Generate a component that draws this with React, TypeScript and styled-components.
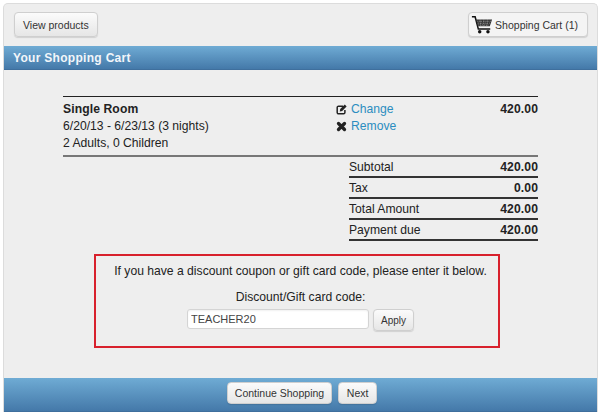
import React from "react";
import styled, { createGlobalStyle } from "styled-components";

const Global = createGlobalStyle`
  html, body { margin: 0; padding: 0; background: #fff; }
  body { width: 601px; height: 414px; overflow: hidden; font-family: "Liberation Sans", Arial, sans-serif; }
`;

const Page = styled.div`
  padding: 3px;
  width: 601px;
  height: 414px;
  box-sizing: border-box;
`;

const Panel = styled.div`
  width: 595px;
  height: 409px;
  box-sizing: border-box;
  background: #eeeeee;
  border: 1px solid #dcdcdc;
  border-bottom: 0;
  border-radius: 5px 5px 0 0;
  display: flex;
  flex-direction: column;
  overflow: hidden;
`;

const TopBar = styled.div`
  height: 42px;
  flex: none;
  display: flex;
  justify-content: space-between;
  align-items: flex-start;
  padding: 8px 9px 0 10px;
  box-sizing: border-box;
`;

const Button = styled.button<{ $flat?: boolean }>`
  height: 25px;
  box-sizing: border-box;
  padding: 0 8px;
  display: inline-flex;
  align-items: center;
  justify-content: center;
  font: 10.5px "Liberation Sans", Arial, sans-serif;
  color: #333;
  border: 1px solid #cfcfcf;
  border-radius: 4px;
  background: ${(p) => (p.$flat ? "#f4f4f4" : "linear-gradient(#fbfbfb, #e6e6e6)")};
  box-shadow: 0 1px 1px rgba(0, 0, 0, 0.12);
`;

const CartButton = styled(Button)`
  padding: 0 9px 0 2px;
  gap: 2px;
`;

const BlueBar = styled.div`
  background: linear-gradient(#6fabd4, #4479a9);
  border-bottom: 1px solid #3f6f9d;
  box-sizing: border-box;
`;

const Header = styled(BlueBar)`
  height: 24px;
  flex: none;
  display: flex;
  align-items: center;
  padding-left: 9px;
  color: #f2f6fa;
  font-size: 12px;
  font-weight: bold;
  letter-spacing: 0.3px;
`;

const Content = styled.div`
  flex: 1;
  padding: 26px 59px 0 59px;
  display: flex;
  flex-direction: column;
  font-size: 12.15px;
  color: #222;
`;

const Item = styled.div`
  border-top: 1px solid #222;
  border-bottom: 2px solid #777;
  height: 61px;
  box-sizing: border-box;
  padding-top: 4px;
  display: grid;
  grid-template-columns: 273px 1fr auto;
  line-height: 17px;
`;

const Strong = styled.div`
  font-weight: bold;
  letter-spacing: 0.1px;
`;

const ActionList = styled.div`
  display: flex;
  flex-direction: column;
`;

const Action = styled.a`
  display: flex;
  align-items: center;
  gap: 4px;
  color: #2b8dc0;
`;

const Summary = styled.div`
  align-self: flex-end;
  width: 189px;
  display: flex;
  flex-direction: column;
`;

const SummaryRow = styled.div`
  display: flex;
  justify-content: space-between;
  align-items: center;
  height: 21px;
  box-sizing: border-box;
  border-bottom: 2px solid #333;
  line-height: 19px;
  padding-top: 2px;
`;

const Promo = styled.div`
  align-self: center;
  margin-top: 13px;
  margin-right: 8px;
  width: 406px;
  height: 94px;
  box-sizing: border-box;
  border: 2px solid #d8202c;
  display: flex;
  flex-direction: column;
  align-items: center;
  padding: 7px 0 0 8px;
`;

const PromoLine = styled.div`
  line-height: 17px;
  margin-bottom: 9px;
`;

const CodeLabel = styled.div`
  line-height: 17px;
  margin-bottom: 3px;
`;

const FormRow = styled.div`
  display: flex;
  align-items: flex-start;
  gap: 4px;
`;

const CodeInput = styled.input`
  width: 182px;
  height: 20px;
  box-sizing: border-box;
  border: 1px solid #d4d4d4;
  border-radius: 3px;
  background: #fff;
  padding: 0 3px;
  font: 11px "Liberation Sans", Arial, sans-serif;
  color: #444;
  box-shadow: inset 0 1px 2px rgba(0, 0, 0, 0.06);
`;

const SmallButton = styled(Button)`
  height: 22px;
  padding: 0 7px;
  font-size: 10px;
`;

const Footer = styled(BlueBar)`
  height: 34px;
  flex: none;
  display: flex;
  justify-content: center;
  align-items: flex-start;
  padding-top: 4px;
  padding-left: 3px;
  gap: 6px;
`;

const FooterButton = styled(Button)`
  height: 22px;
  padding: 0 7px;
  min-width: 39px;
`;

const CartIcon = () => (
  <svg width="22" height="21" viewBox="0 0 24 22" aria-hidden="true">
    <path d="M1 2.5h3.5L8 16h13" fill="none" stroke="#111" strokeWidth="1.7" />
    <path d="M5.5 5.5H23L20.5 13H7.5Z" fill="#333" />
    <path d="M7 7.5h15M7.5 9.5h13.5M8 11.5h12M10 5.5l1 8M14 5.5v8M18 5.5l-1 8" stroke="#bbb" strokeWidth="0.7" strokeDasharray="1 1" fill="none" />
    <circle cx="9.5" cy="19" r="1.9" fill="#111" />
    <circle cx="18.5" cy="19" r="1.9" fill="#111" />
  </svg>
);

const EditIcon = () => (
  <svg width="11" height="11" viewBox="0 0 11 11" aria-hidden="true">
    <path d="M7 2.2H2.6A1.3 1.3 0 0 0 1.2 3.5v5a1.3 1.3 0 0 0 1.4 1.3h5a1.3 1.3 0 0 0 1.3-1.3V6" fill="none" stroke="#222" strokeWidth="1.5" />
    <path d="M3.8 7.4 4.2 5 8.8.6l1.8 1.8L6.2 6.9Z" fill="#222" />
  </svg>
);

const RemoveIcon = () => (
  <svg width="11" height="11" viewBox="0 0 11 11" aria-hidden="true">
    <path d="M2.5 2.5 8.5 8.5M8.5 2.5 2.5 8.5" stroke="#222" strokeWidth="3.3" strokeLinecap="round" />
  </svg>
);

const totals = [
  ["Subtotal", "420.00"],
  ["Tax", "0.00"],
  ["Total Amount", "420.00"],
  ["Payment due", "420.00"],
];

export default function App() {
  return (
    <Page>
      <Global />
      <Panel>
        <TopBar>
          <Button>View products</Button>
          <CartButton $flat>
            <CartIcon />
            Shopping Cart (1)
          </CartButton>
        </TopBar>
        <Header>Your Shopping Cart</Header>
        <Content>
          <Item>
            <div>
              <Strong>Single Room</Strong>
              <div>6/20/13 - 6/23/13 (3 nights)</div>
              <div>2 Adults, 0 Children</div>
            </div>
            <ActionList>
              <Action>
                <EditIcon />
                Change
              </Action>
              <Action>
                <RemoveIcon />
                Remove
              </Action>
            </ActionList>
            <Strong>420.00</Strong>
          </Item>
          <Summary>
            {totals.map(([label, value]) => (
              <SummaryRow key={label}>
                <span>{label}</span>
                <Strong>{value}</Strong>
              </SummaryRow>
            ))}
          </Summary>
          <Promo>
            <PromoLine>If you have a discount coupon or gift card code, please enter it below.</PromoLine>
            <CodeLabel>Discount/Gift card code:</CodeLabel>
            <FormRow>
              <CodeInput defaultValue="TEACHER20" />
              <SmallButton>Apply</SmallButton>
            </FormRow>
          </Promo>
        </Content>
        <Footer>
          <FooterButton>Continue Shopping</FooterButton>
          <FooterButton>Next</FooterButton>
        </Footer>
      </Panel>
    </Page>
  );
}
